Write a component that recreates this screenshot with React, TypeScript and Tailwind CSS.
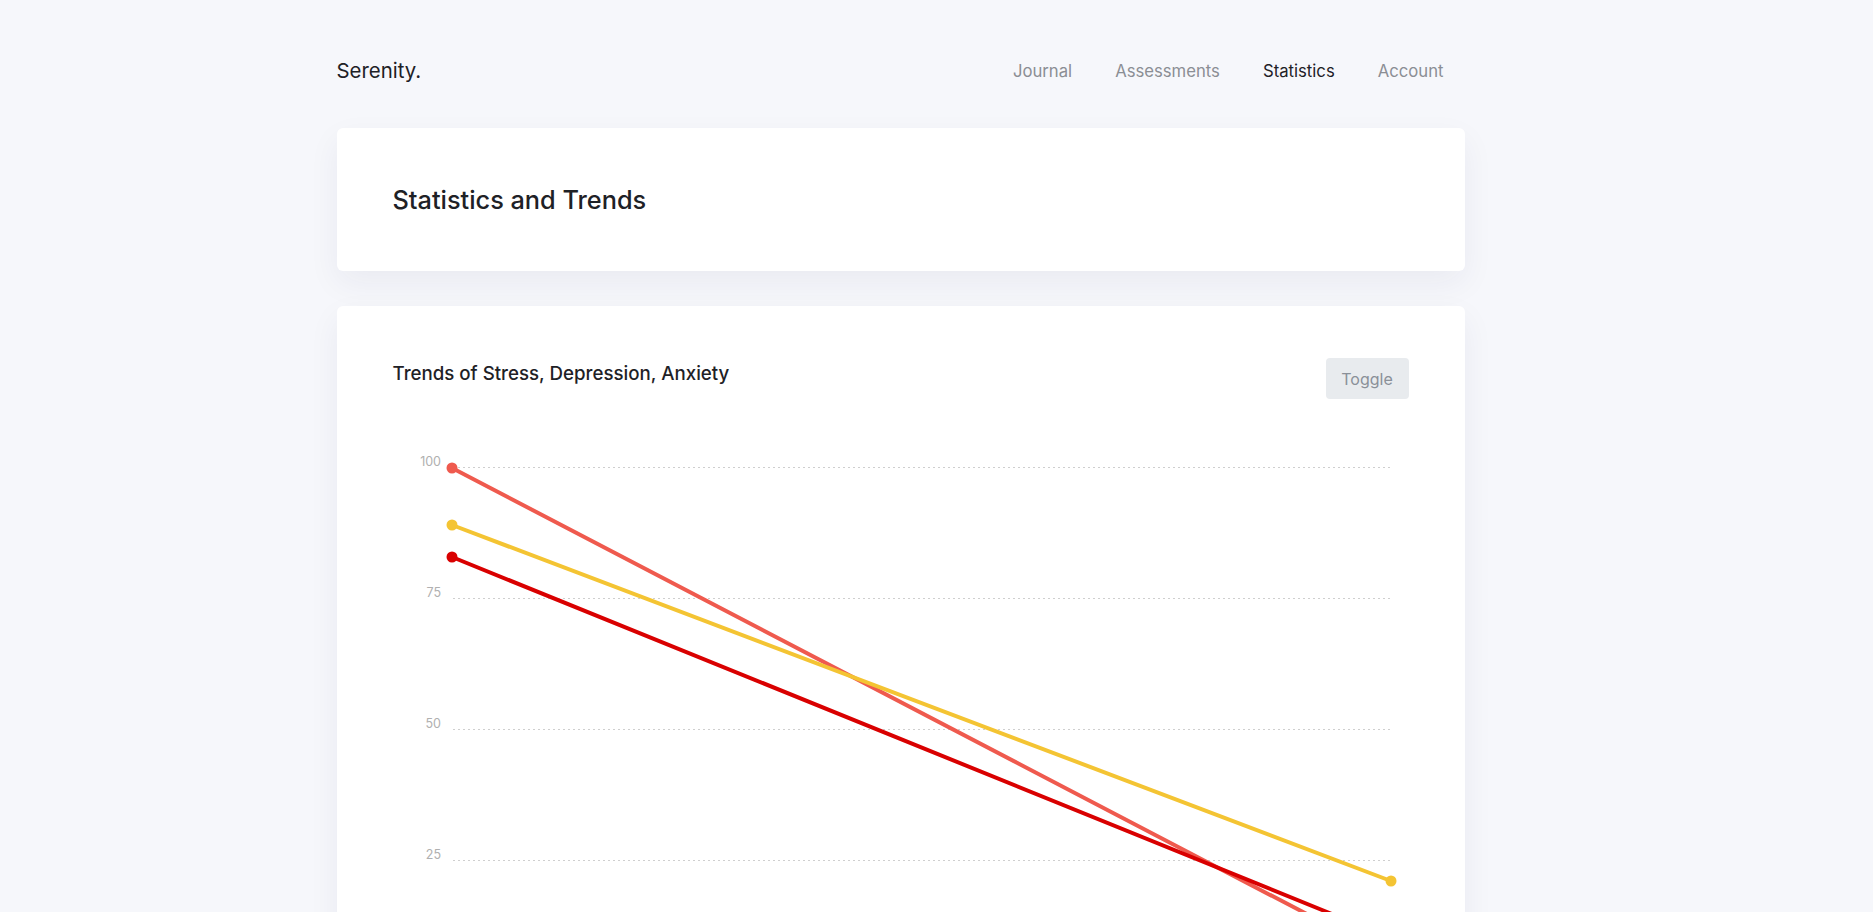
import React from "react";

const gridLines = [
  { label: "100", y: 47 },
  { label: "75", y: 178 },
  { label: "50", y: 309 },
  { label: "25", y: 440 },
];

const series = [
  { color: "#ef5a4e", y1: 48, y2: 538 },
  { color: "#d90000", y1: 137, y2: 518 },
  { color: "#f4c433", y1: 105, y2: 461 },
];

function Chart() {
  const x1 = 59;
  const x2 = 998;
  return (
    <svg width={1016} height={560} viewBox="0 0 1016 560" className="block">
      {gridLines.map((g) => (
        <g key={g.label}>
          <line
            x1={60}
            x2={997}
            y1={g.y + 0.5}
            y2={g.y + 0.5}
            stroke="#cfcfcf"
            strokeWidth={1}
            strokeDasharray="2 3"
          />
          <text
            x={48}
            y={g.y - 1}
            textAnchor="end"
            fontSize={12.5}
            fill="#b0b0b0"
            fontFamily="Inter, 'Noto Sans', sans-serif"
          >
            {g.label}
          </text>
        </g>
      ))}
      {series.map((s) => (
        <g key={s.color}>
          <line
            x1={x1}
            y1={s.y1}
            x2={x2}
            y2={s.y2}
            stroke={s.color}
            strokeWidth={4}
            strokeLinecap="round"
          />
          <circle cx={x1} cy={s.y1} r={5.5} fill={s.color} />
          <circle cx={x2} cy={s.y2} r={5.5} fill={s.color} />
        </g>
      ))}
    </svg>
  );
}

export default function App() {
  return (
    <div
      className="min-h-screen bg-[#f6f7fb]"
      style={{ fontFamily: "Inter, 'Noto Sans', sans-serif" }}
    >
      <div className="w-[1200px] mx-auto">
        <div className="w-[1128px]">
          <header className="h-[128px] flex items-start justify-between pt-[57px]">
            <div className="text-[20.4px] leading-[28px] text-[#1e2126]">Serenity.</div>
            <nav className="flex gap-[43px] pr-[21px] text-[16.7px] leading-[28px]">
              <a className="text-[#8b8e94]">Journal</a>
              <a className="text-[#8b8e94]">Assessments</a>
              <a className="text-[#1e2126]">Statistics</a>
              <a className="text-[#8b8e94]">Account</a>
            </nav>
          </header>

          <section className="h-[143px] bg-white rounded-[6px] flex items-center px-[56px] shadow-[0_12px_32px_rgba(30,40,90,0.06)]">
            <h1 className="text-[25.3px] leading-[34px] font-medium text-[#1e2126]">
              Statistics and Trends
            </h1>
          </section>

          <section className="mt-[35px] bg-white rounded-[6px] px-[56px] pt-[52px] shadow-[0_12px_32px_rgba(30,40,90,0.06)]">
            <div className="flex items-start justify-between">
              <h2 className="mt-[2px] text-[18.7px] leading-[28px] font-medium text-[#1e2126]">
                Trends of Stress, Depression, Anxiety
              </h2>
              <button className="h-[41px] w-[83px] rounded-[4px] bg-[#e8ebee] text-[16px] text-[#8a9098]">
                Toggle
              </button>
            </div>
            <div className="mt-[21px]">
              <Chart />
            </div>
          </section>
        </div>
      </div>
    </div>
  );
}
